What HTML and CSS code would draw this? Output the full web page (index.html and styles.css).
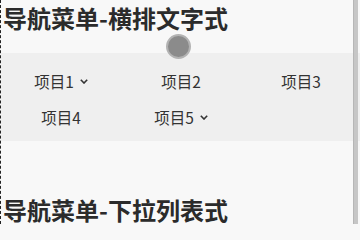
FILE: index.html
```html
<!DOCTYPE html>
<html lang="zh">
<head>
<meta charset="utf-8">
<link rel="stylesheet" href="styles.css">
</head>
<body>
<div class="page">
  <h2 class="title">导航菜单-横排文字式</h2>
  <nav class="nav">
    <div class="item">项目1<svg class="chev" viewBox="0 0 8 5"><path d="M0.8 0.8 L4 4 L7.2 0.8"/></svg></div>
    <div class="item">项目2</div>
    <div class="item">项目3</div>
    <div class="item">项目4</div>
    <div class="item">项目5<svg class="chev" viewBox="0 0 8 5"><path d="M0.8 0.8 L4 4 L7.2 0.8"/></svg></div>
  </nav>
  <h2 class="title second">导航菜单-下拉列表式</h2>
  <div class="dot"></div>
  <div class="scrollbar"></div>
</div>
</body>
</html>
```
FILE: styles.css
```css
html, body {
  margin: 0;
  padding: 0;
  width: 360px;
  height: 224px;
  background: #f8f8f8;
  overflow: hidden;
}
.page {
  display: flow-root;
  position: relative;
  width: 359px;
  height: 224px;
  border-left: 1px dashed #222;
  overflow: hidden;
}
.title {
  margin: 2px 0 0;
  padding-left: 2px;
  font: bold 24px/32px "Noto Sans CJK SC", "Noto Sans", sans-serif;
  color: #2b2b2b;
  white-space: nowrap;
}
.nav {
  margin-top: 19px;
  background: #efefef;
  padding: 10px 0 6px;
  display: grid;
  grid-template-columns: repeat(3, 120px);
}
.item {
  height: 36px;
  display: flex;
  align-items: center;
  justify-content: center;
  gap: 6px;
  font: 15.5px "Noto Sans CJK SC", "Noto Sans", sans-serif;
  color: #333;
}
.chev {
  width: 8px;
  height: 5px;
  fill: none;
  stroke: #333;
  stroke-width: 1.6;
}
.second {
  margin-top: 53px;
}
.dot {
  position: absolute;
  left: 165px;
  top: 34px;
  width: 21px;
  height: 21px;
  border-radius: 50%;
  background: #8b8b8b;
  border: 2px solid #b3b3b3;
}
.scrollbar {
  position: absolute;
  top: 0;
  right: 2px;
  width: 5px;
  height: 224px;
  background: #c6c6c6;
  border-left: 1px solid #b6b6b6;
  box-sizing: border-box;
}
```
